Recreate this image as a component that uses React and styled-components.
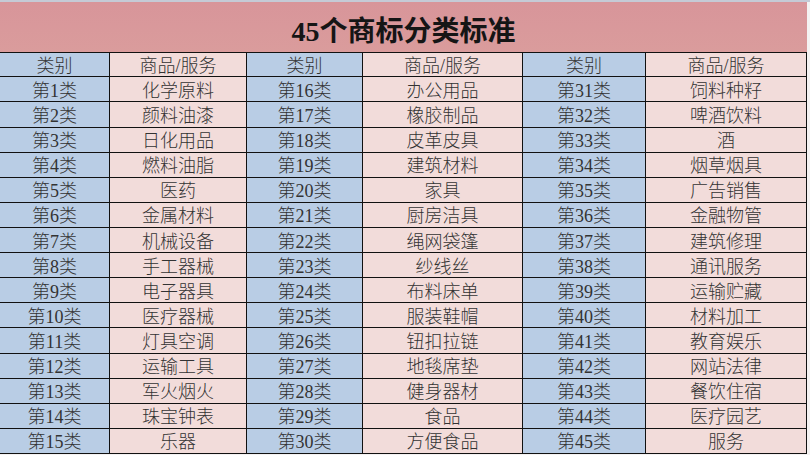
import React from "react";
import styled, { createGlobalStyle } from "styled-components";

const Global = createGlobalStyle`
  html, body { margin: 0; padding: 0; background: #ffffff; }
  #root { width: 810px; height: 455px; overflow: hidden; }
`;

const Sheet = styled.div`
  width: 810px;
  height: 455px;
  overflow: hidden;
  background: #f4f2f2;
  border-top: 2px solid #c5cad6;
  box-sizing: border-box;
  font-family: "Liberation Serif", "Noto Sans CJK SC", serif;
`;

const Title = styled.div`
  width: 807px;
  height: 51px;
  box-sizing: border-box;
  background: linear-gradient(#d8959a, #da9c9c);
  border-bottom: 1px solid #111;
  display: flex;
  align-items: center;
  justify-content: center;
  padding-top: 4px;
  font-size: 28px;
  font-weight: 700;
  color: #151515;
`;

const Grid = styled.div`
  display: grid;
  width: 807px;
  grid-template-columns: 110px 137px 116px 160px 123px 161px;
  grid-template-rows: 24.3px repeat(15, 25.12px);
`;

const Cell = styled.div`
  box-sizing: border-box;
  background: ${(p) => (p.$tone === "blue" ? "#b9cde5" : "#f2dcda")};
  border-right: 1px solid #111;
  border-bottom: 1px solid #111;
  display: flex;
  align-items: center;
  justify-content: center;
  font-size: 18px;
  font-weight: 300;
  color: #333333;
  white-space: nowrap;
  line-height: 1;
  padding-top: 3px;
`;

const goods = [
  "化学原料", "颜料油漆", "日化用品", "燃料油脂", "医药", "金属材料", "机械设备", "手工器械",
  "电子器具", "医疗器械", "灯具空调", "运输工具", "军火烟火", "珠宝钟表", "乐器",
  "办公用品", "橡胶制品", "皮革皮具", "建筑材料", "家具", "厨房洁具", "绳网袋篷", "纱线丝",
  "布料床单", "服装鞋帽", "钮扣拉链", "地毯席垫", "健身器材", "食品", "方便食品",
  "饲料种籽", "啤酒饮料", "酒", "烟草烟具", "广告销售", "金融物管", "建筑修理", "通讯服务",
  "运输贮藏", "材料加工", "教育娱乐", "网站法律", "餐饮住宿", "医疗园艺", "服务",
];

const groups = [0, 1, 2];
const rows = Array.from({ length: 15 }, (_, r) => r);

export default function App() {
  return (
    <>
      <Global />
      <Sheet>
        <Title>45个商标分类标准</Title>
        <Grid>
          {groups.map((g) => (
            <React.Fragment key={`h${g}`}>
              <Cell $tone="blue">类别</Cell>
              <Cell $tone="pink">商品/服务</Cell>
            </React.Fragment>
          ))}
          {rows.map((r) =>
            groups.map((g) => {
              const n = g * 15 + r + 1;
              return (
                <React.Fragment key={n}>
                  <Cell $tone="blue">第{n}类</Cell>
                  <Cell $tone="pink">{goods[n - 1]}</Cell>
                </React.Fragment>
              );
            })
          )}
        </Grid>
      </Sheet>
    </>
  );
}
